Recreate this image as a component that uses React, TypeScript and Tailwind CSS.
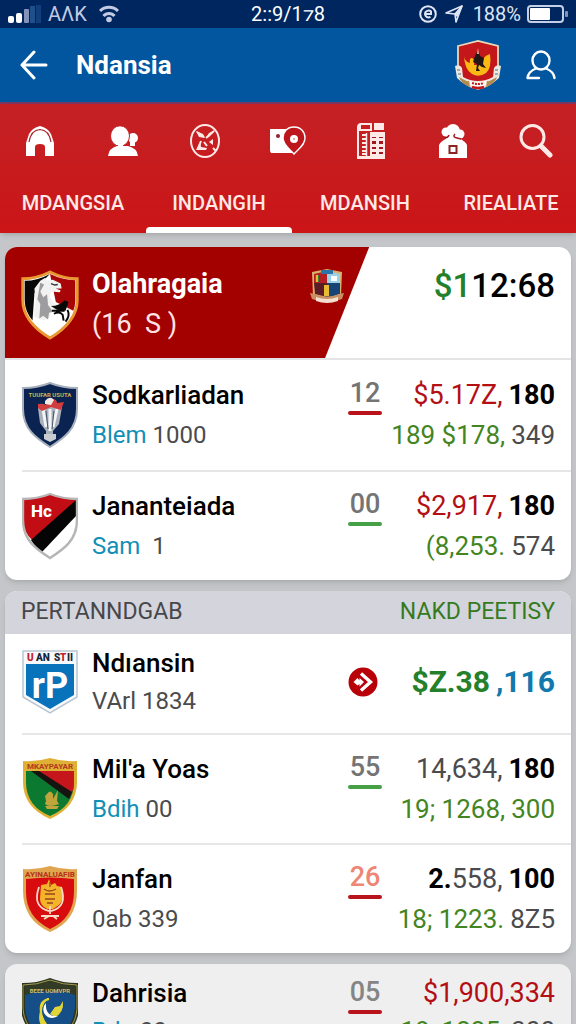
import type { ReactNode } from "react";
import clsx from "clsx";

type Piece = { text: string; className: string };

type Team = {
  key: string;
  name: string;
  tag?: string;
  detail: string;
  crest: ReactNode;
  count?: string;
  countClass?: string;
  barClass?: string;
  amount: Piece[];
  sub?: Piece[];
  compact?: boolean;
};

const RED = "text-[#b30f14]";
const GREEN = "text-[#43851f]";
const GRAY = "text-[#4b4b4d]";
const STRONG = "font-bold text-black";

const TABS = ["MDANGSIA", "INDANGIH", "MDANSIH", "RIEALIATE"];

const TOP_TEAMS: Team[] = [
  {
    key: "sod",
    name: "Sodkarliadan",
    tag: "Blem",
    detail: "1000",
    crest: <CupCrest />,
    count: "12",
    countClass: "text-[#747474]",
    barClass: "bg-[#b9131b]",
    amount: [{ text: "$5.17Z,", className: RED }, { text: "180", className: STRONG }],
    sub: [{ text: "189 $178,", className: GREEN }, { text: "349", className: GRAY }],
  },
  {
    key: "jan",
    name: "Jananteiada",
    tag: "Sam",
    detail: "\u00a01",
    crest: <StripeCrest />,
    count: "00",
    countClass: "text-[#747474]",
    barClass: "bg-[#46a046]",
    amount: [{ text: "$2,917,", className: RED }, { text: "180", className: STRONG }],
    sub: [{ text: "(8,253.", className: GREEN }, { text: "574", className: GRAY }],
  },
];

const SECTION_TEAMS: Team[] = [
  {
    key: "ndi",
    name: "Ndıansin",
    detail: "VArl 1834",
    crest: <BlueCrest />,
    amount: [
      { text: "$Z.38", className: "font-bold text-[#24802a]" },
      { text: ",116", className: "font-bold text-[#1279ad]" },
    ],
    compact: true,
  },
  {
    key: "mil",
    name: "Mil'a Yoas",
    tag: "Bdih",
    detail: "00",
    crest: <GreenCrest />,
    count: "55",
    countClass: "text-[#747474]",
    barClass: "bg-[#46a046]",
    amount: [{ text: "14,634,", className: GRAY }, { text: "180", className: STRONG }],
    sub: [{ text: "19; 1268,", className: GREEN }, { text: "300", className: GREEN }],
  },
  {
    key: "janfan",
    name: "Janfan",
    detail: "0ab 339",
    crest: <RedCrest />,
    count: "26",
    countClass: "text-[#ee8674]",
    barClass: "bg-[#b9131b]",
    amount: [
      { text: "2.", className: STRONG },
      { text: "558,", className: GRAY },
      { text: "100", className: STRONG },
    ],
    sub: [{ text: "18; 1223.", className: GREEN }, { text: "8Z5", className: GRAY }],
  },
];

const LAST_TEAM: Team = {
  key: "dah",
  name: "Dahrisia",
  tag: "Bdn",
  detail: "00",
  crest: <EagleCrest />,
  count: "05",
  countClass: "text-[#858585]",
  barClass: "bg-[#b9131b]",
  amount: [{ text: "$1,900,334", className: RED }],
  sub: [{ text: "18; 1225,", className: GREEN }, { text: "300", className: GRAY }],
  compact: true,
};

export default function App() {
  return (
    <div className="flex h-screen flex-col overflow-hidden bg-[#c4c6c9] font-['Roboto',sans-serif] text-black">
      <StatusBar />
      <header className="flex h-[76px] shrink-0 items-center border-b-2 border-[#7c3560] bg-[#02569f] px-5 text-white">
        <button type="button" aria-label="Back" className="shrink-0">
          <svg viewBox="0 0 28 30" className="h-[30px] w-7" fill="none" stroke="currentColor" strokeWidth="3" strokeLinecap="round" strokeLinejoin="round">
            <path d="M14 2 2 15l12 13M2 15h24" />
          </svg>
        </button>
        <h1 className="ml-7 flex-1 text-[26px] font-bold">Ndansia</h1>
        <HeaderCrest />
        <button type="button" aria-label="Profile" className="ml-6">
          <svg viewBox="0 0 30 30" className="h-[30px] w-[30px]" fill="none" stroke="currentColor" strokeWidth="2.4" strokeLinecap="round" strokeLinejoin="round">
            <ellipse cx="15" cy="10.5" rx="8.5" ry="9" />
            <path d="M10 18.5C5 20.5 2 23.5 1.5 28H13M20 18.5c5 2 8 5 8.500 9.5" />
          </svg>
        </button>
      </header>

      <nav className="shrink-0 overflow-hidden bg-linear-to-b from-[#c42125] to-[#cb1416] text-white shadow-md">
        <div className="flex h-[74px] items-center justify-between px-[22px]">
          <NavButton label="Home"><HomeIcon /></NavButton>
          <NavButton label="People"><PeopleIcon /></NavButton>
          <NavButton label="Matches"><BallIcon /></NavButton>
          <NavButton label="Places"><PlaceIcon /></NavButton>
          <NavButton label="Schedule"><SheetIcon /></NavButton>
          <NavButton label="Club"><ClubIcon /></NavButton>
          <NavButton label="Search"><SearchIcon /></NavButton>
        </div>
        <div className="-mr-2 grid grid-cols-4">
          {TABS.map((tab, i) => (
            <button
              key={tab}
              type="button"
              aria-pressed={i === 1}
              className="flex h-[55px] flex-col items-center text-xl font-medium text-[#ffe9e6]"
            >
              <span className="flex flex-1 items-center leading-none">{tab}</span>
              <span className={clsx("h-1.5 w-full rounded-t", i === 1 && "bg-white")} />
            </button>
          ))}
        </div>
      </nav>

      <main className="flex flex-1 flex-col gap-[11px] px-[5px] pt-3.5">
        <section className="shrink-0 overflow-hidden rounded-xl bg-white shadow-md">
          <div className="flex h-[113px] border-b-2 border-[#e4e4e6]">
            <div className="flex w-[65%] items-start bg-[#a30000] pt-[17px] pr-7 pl-[15px] text-white [clip-path:polygon(0_0,99%_0,87%_100%,0_100%)]">
              <HorseCrest />
              <div className="ml-3 flex-1">
                <h2 className="text-[27px] leading-10 font-bold">Olahragaia</h2>
                <p className="text-[27px] leading-10 whitespace-pre text-[#ffe3e3]">(16  S )</p>
              </div>
              <ShieldCrest />
            </div>
            <p className="flex-1 pt-[17px] pr-4 text-right text-[33px] leading-[44px] font-medium">
              <span className="text-[#24802a]">$1</span>12:68
            </p>
          </div>
          <TeamList teams={TOP_TEAMS} />
        </section>

        <section className="shrink-0 overflow-hidden rounded-xl bg-white shadow-md">
          <div className="flex h-[43px] items-center justify-between bg-[#d4d5dc] px-4 text-[23px]">
            <h2 className="text-[#47474b]">PERTANNDGAB</h2>
            <a href="#payments" className="text-[#357a1f]">NAKD PEETISY</a>
          </div>
          <TeamList teams={SECTION_TEAMS} />
        </section>

        <section className="shrink-0 overflow-hidden rounded-xl bg-[#efefef] shadow-md">
          <TeamList teams={[LAST_TEAM]} />
        </section>
      </main>
    </div>
  );
}

function StatusBar() {
  return (
    <div className="grid h-7 shrink-0 grid-cols-[1fr_auto_1fr] items-center bg-[#00265f] px-2 text-xl leading-none text-white">
      <div className="flex items-center text-[#c3cbe2]">
        <svg viewBox="0 0 34 18" className="h-[18px] w-[34px]">
          <rect x="0" y="11" width="6" height="7" rx="2" fill="#fff" />
          <rect x="8" y="8" width="6" height="10" rx="2" fill="#fff" />
          <rect x="16" y="4" width="5" height="14" rx="1" fill="#8492b8" />
          <rect x="22" y="1" width="5" height="17" fill="#20508c" />
          <rect x="28" y="0" width="5" height="18" fill="#123f7c" />
        </svg>
        <span className="ml-1.5">AΛK</span>
        <svg viewBox="0 0 20 18" className="ml-3 h-[18px] w-5" fill="none" stroke="currentColor" strokeWidth="3">
          <path d="M1 6c5-5 13-5 18 0M4.500 11c3-3.500 8-3.500 11 0" />
          <circle cx="10" cy="14.500" r="2.800" fill="currentColor" stroke="none" />
        </svg>
      </div>
      <span>2::9/1⁊8</span>
      <div className="flex items-center justify-end text-[#dfe5f3]">
        <svg viewBox="0 0 18 18" className="h-[18px] w-[18px]" fill="none" stroke="currentColor" strokeWidth="2">
          <circle cx="9" cy="9" r="7.800" />
          <path d="M6 9h6V6.500C10 4.500 6 6 6 9c0 3 3 4 5.500 3" />
        </svg>
        <svg viewBox="0 0 18 18" className="ml-2 h-[18px] w-[18px]" fill="none" stroke="currentColor" strokeWidth="1.600" strokeLinejoin="round">
          <path d="M1 8 17 1l-6 16-1-8Z" />
          <path d="M10 9 17 1l-5 10Z" fill="currentColor" />
        </svg>
        <span className="ml-2.5">188%</span>
        <svg viewBox="0 0 41 18" className="ml-1.5 h-[18px] w-[41px]">
          <rect x="1" y="1" width="35" height="16" rx="3" fill="none" stroke="#c3cfe4" strokeWidth="2" />
          <rect x="3" y="3" width="20" height="12" rx="1" fill="#fff" />
          <rect x="38" y="6" width="3" height="6" rx="1" fill="#7f93bd" />
        </svg>
      </div>
    </div>
  );
}

function NavButton({ label, children }: { label: string; children: ReactNode }) {
  return (
    <button type="button" aria-label={label} className="flex h-9 w-9 items-center justify-center">
      {children}
    </button>
  );
}

function TeamList({ teams }: { teams: Team[] }) {
  return (
    <ul>
      {teams.map((team, i) => (
        <li key={team.key} className="pl-[17px]">
          <TeamRow team={team} divider={i > 0} />
        </li>
      ))}
    </ul>
  );
}

function TeamRow({ team, divider }: { team: Team; divider: boolean }) {
  return (
    <div
      className={clsx(
        "flex items-center pr-4",
        team.compact ? "h-[99px] pb-1" : "h-[110px]",
        divider && "border-t-2 border-[#e6e6e8]",
      )}
    >
      <div className="w-14 shrink-0">{team.crest}</div>
      <div className="ml-3.5 flex-1">
        <h3 className={clsx("text-[26px] font-medium", team.compact ? "leading-[38px]" : "leading-10")}>{team.name}</h3>
        <p className={clsx("text-2xl text-[#4b4b4d]", team.compact ? "leading-[38px]" : "leading-10")}>
          {team.tag && <span className="mr-1.5 text-[#128fb5]">{team.tag}</span>}
          {team.detail}
        </p>
      </div>
      {team.count ? (
        <div className={clsx("w-[34px] text-center", team.compact ? "h-[76px]" : "h-20")}>
          <span className={clsx("block text-[27px] leading-9 font-medium", team.countClass)}>{team.count}</span>
          <span className={clsx("block h-1 rounded-full", team.barClass)} />
        </div>
      ) : (
        <ArrowBadge />
      )}
      <div className="w-[173px]">
        {team.sub ? (
          <>
            <Amount pieces={team.amount} className={clsx("text-[27px]", team.compact ? "leading-[38px]" : "leading-10")} />
            <Amount pieces={team.sub} className={clsx("text-[26px]", team.compact ? "leading-[38px]" : "leading-10")} />
          </>
        ) : (
          <Amount pieces={team.amount} className="text-3xl leading-10" />
        )}
      </div>
    </div>
  );
}

function Amount({ pieces, className }: { pieces: Piece[]; className: string }) {
  const last = pieces.length - 1;
  return (
    <p className={clsx("flex justify-end whitespace-nowrap", className)}>
      {pieces.map((p, i) => (
        <span key={i} className={clsx(p.className, i > 0 && i === last && "ml-1.5")}>
          {p.text}
        </span>
      ))}
    </p>
  );
}

function ArrowBadge() {
  return (
    <svg viewBox="0 0 30 30" className="mr-1 h-[30px] w-[30px]">
      <circle cx="15" cy="15" r="14.500" fill="#b80008" />
      <path d="M13 6.500 22.500 15 13 23.500" fill="none" stroke="#fff" strokeWidth="3.400" />
      <path d="m5.500 15 4-4 2 2.500V11l4.500 4-4.500 4.500V17L9.500 18.500Z" fill="#fff" />
    </svg>
  );
}

// nav icons

function HomeIcon() {
  return (
    <svg viewBox="0 0 30 30" className="h-[30px] w-[30px]">
      <path d="M1 30V17L4 8Q7 2 15 0q8 2 11 8l3 9v13h-9V21q0-3-5-3t-5 3v9Z" fill="#fff" />
      <path d="M4 16Q6 4 15 3.500 24 4 26 16" fill="none" stroke="#a5232b" strokeWidth="1.200" />
    </svg>
  );
}

function PeopleIcon() {
  return (
    <svg viewBox="0 0 30 30" className="h-[30px] w-[30px]" fill="#fff">
      <circle cx="25" cy="12" r="5" />
      <path d="M22 15h5v5h-5Z" />
      <ellipse cx="12" cy="10" rx="9.500" ry="10.200" stroke="#c42125" strokeWidth="1" />
      <path d="M0 30q1-8 9-10h11q9 2 10 10Z" />
      <path d="M10 20h5" stroke="#fff" strokeWidth="3" />
    </svg>
  );
}

function BallIcon() {
  return (
    <svg viewBox="0 0 30 34" className="h-[34px] w-[30px]" fill="none" stroke="#ffe9e6" strokeWidth="2">
      <ellipse cx="15" cy="17" rx="14" ry="16" />
      <path d="m7 8 7 5M24 7l-8 7M7 25h9M8 25l3-8M14 18l3 4M23 24l3 3" />
      <path d="m6 7 7 3 2 4-6-1ZM25 6l-6 7-3 1 3-5ZM19 18l4-3v6ZM6 26l4-8 1 5 6 1-1 2Z" fill="#ffe9e6" stroke="none" />
    </svg>
  );
}

function PlaceIcon() {
  return (
    <svg viewBox="0 0 36 30" className="h-[30px] w-9">
      <path d="M0 3h22v24H1l-1-2Z" fill="#fff" />
      <circle cx="8" cy="10" r="2" fill="#8d2233" />
      <path d="M24 1c7 0 11 5 11 11 0 7-6 10-11 16-5-6-11-9-11-16C13 6 17 1 24 1Z" fill="#bd161c" stroke="#fff" strokeWidth="1.400" />
      <circle cx="24" cy="13" r="4" fill="#fff" />
      <circle cx="24" cy="13" r="1" fill="#c98" />
    </svg>
  );
}

function SheetIcon() {
  return (
    <svg viewBox="0 0 28 36" className="h-9 w-7" fill="#ffe9e6">
      <path d="M3 0h12v8H2v25h26v3H0V4Q0 1 3 0Zm1 2v4h9V2Z" fillRule="evenodd" />
      <path d="M17 0h10v7H17Z" />
      <path d="M13 9h15v25H13Z" />
      <path d="M5 12h5M5 16h5M5 20h5M5 24h5M5 28h5M5 31h5" stroke="#ffe9e6" strokeWidth="2" />
      <path d="M9.500 10v23" stroke="#ffe9e6" strokeWidth="1.500" />
      <path d="M15 14h4v1h-4Zm7 0h4v1h-4Zm-7 4h4v3h-4Zm7 0h4v3h-4Zm-7 6h4v2h-4Zm7 0h4v2h-4Zm-7 5h4v2h-4Zm7 0h4v2h-4Z" fill="#a3161f" />
    </svg>
  );
}

function ClubIcon() {
  return (
    <svg viewBox="0 0 30 34" className="h-[34px] w-[30px]" fill="#fff">
      <circle cx="8" cy="8" r="4.500" />
      <circle cx="15" cy="7" r="7" />
      <circle cx="22" cy="10" r="4.500" />
      <path d="M8 9h14v6H8Z" />
      <path d="m1 34V21q1-3 8-7h12q7 4 8 7v13Z" />
      <path d="M6 14q4 0 5-3M17 10q-3 3 2 4l4 1" fill="none" stroke="#a3161f" strokeWidth="1.500" />
      <path d="M11.500 22h7v7h-7Z" fill="#fff" stroke="#8d2222" strokeWidth="2" />
    </svg>
  );
}

function SearchIcon() {
  return (
    <svg viewBox="0 0 34 36" className="h-9 w-[34px]" fill="none" stroke="#ffe9e6">
      <circle cx="13.500" cy="14" r="11.500" strokeWidth="3" />
      <path d="m22 23 9 9" strokeWidth="5" strokeLinecap="round" />
    </svg>
  );
}

// crests

const SHIELD = "M1 7Q15 7 28 2q13 5 27 5v21c0 20-13 29-27 38C14 57 1 48 1 28Z";

function HeaderCrest() {
  return (
    <svg viewBox="0 0 48 50" className="h-[50px] w-12">
      <path d="M4 6 24 1l20 5v26q-2 12-20 17Q6 44 4 32Z" fill="#c3171c" stroke="#ead9b9" strokeWidth="1.800" />
      <path d="M10 14q0 8 6 9-1-5 2-5 3 1 2 7h8q-1-8 8-11 2 14-4 19-7 5-14 1-8-5-8-20Z" fill="#fcb813" />
      <path d="M23 12h2l1 4 4 2-1 6 3 4-4-1-3-2-1 3 2 3h-4l1-7-4-2 2-6Z" fill="#231616" />
      <path d="m23 14 1-6 1 6Z" fill="#f4b29c" />
      <path d="M1 26q5-2 7 2l1 9q7 4 15 4t15-4l1-9q2-4 7-2l-2 12q-8 8-21 9Q10 46 3 38Z" fill="#efe8df" />
      <path d="M5 37q8 5 10 4l1 6Q7 44 5 37ZM43 37q-8 5-10 4l-1 6q9-3 11-10Z" fill="#b28b50" />
      <path d="M16 41q8 3 16 0v4q-8 4-16 0Z" fill="#fff" />
      <path d="M18 43q6 2 12 0" fill="none" stroke="#c3171c" strokeWidth="2" strokeDasharray="2 1" />
      <path d="M18 47q6 2 12 0" fill="none" stroke="#c3171c" strokeWidth="2.500" />
      <path d="M3 30h3M4 34h3M41 30h3M41 34h3" stroke="#8297a5" strokeWidth="1.500" />
    </svg>
  );
}

function HorseCrest() {
  return (
    <svg viewBox="0 0 60 72" className="mt-1.5 h-[70px] w-[60px] shrink-0">
      <path d="M2 9q14 0 28-7 14 7 28 7v22c0 19-15 31-28 39C17 62 2 50 2 31Z" fill="#fff" stroke="#e99832" strokeWidth="3" />
      <path d="M30 4q13 6 26 6.500V31q0 6-2 11L36 33Z" fill="#a80508" />
      <path d="M4 11q13 0 26-7l-8 8-8 12-2 28Q4 42 4 31Z" fill="#080808" />
      <path d="m20 11 5-3 2 3 6-1 8 4 1 5h-6l5 2-1 2-9-1-1 6 4 6 11 3-2 5-11-1-3 9-6 2-10-4 2-15-1-14Z" fill="#f1f1f1" />
      <path d="m20 13 4 2-4 7 3 6 4-3 1 11 5 7-4 1-1 7-5-4-4 3 1-15-3-5Z" fill="#9d9da0" />
      <path d="M31 37q9 0 14-6l4 2-3 9-9-1Z" fill="#080808" />
      <path d="M34 45q6-3 9 1l1 6M32 42h13M48 41q3 6-2 12" fill="none" stroke="#080808" strokeWidth="2" />
      <path d="m31 14 4 1.500 3-.5" stroke="#333" strokeWidth="1.500" fill="none" />
    </svg>
  );
}

function ShieldCrest() {
  return (
    <svg viewBox="0 0 36 36" className="mt-1 h-9 w-9 shrink-0">
      <path d="M3 4 18 1l15 3-1 24-14 5L4 28Z" fill="#d8b16a" />
      <path d="M5 6 18 3v12H5Z" fill="#b51f23" />
      <path d="M18 3 31 6v9H18Z" fill="#9bd2e7" />
      <path d="M5 15h13v14l-12-3Z" fill="#5a1d27" />
      <path d="M18 15h13v11l-13 4Z" fill="#174377" />
      <path d="M6 7h4v7H6Z" fill="#3d7a38" />
      <path d="M7 7h2v7H7Zm8 10h5v11h-5Z" fill="#e9bb32" />
      <path d="M12 2h12v4H12Z" fill="#2a75a6" />
      <path d="M22 8h6v5h-6Z" fill="#fff" />
      <path d="m1 25 5 1q12 5 24 0l5-1-2 6q-15 6-30 0Z" fill="#c78f62" />
      <path d="M7 29q11 4 22 0v4q-11 4-22 0Z" fill="#f4dfcf" />
    </svg>
  );
}

function CupCrest() {
  return (
    <svg viewBox="0 0 56 68" className="h-[68px] w-14">
      <path d={SHIELD} fill="#0b2350" stroke="#a6afbb" strokeWidth="2" />
      <text x="28" y="16" textAnchor="middle" fontSize="6" fontWeight="700" fill="#c9b155">TUUFAR USUTA</text>
      <path d="M16 27q12-5 24-1l-3 17-6 7v8h-7v-8l-6-8Z" fill="#a8b0b9" />
      <path d="m21 28 3 18M28 28v22M35 28l-4 18" stroke="#f2f4f6" strokeWidth="3" />
      <path d="M24 30l2 18M32 30l-2 18" stroke="#495467" strokeWidth="1" />
      <path d="M16 23q5-1 8 1 2-6 8-6 3 1 3 4l7-1-3 8-10-3-9 4-4-3Z" fill="#d23c3e" />
      <path d="M23 20q5-6 9-1l-3 5-6-1Z" fill="#f4e9e5" />
      <path d="M22 53h12v5l-6 3-6-3Z" fill="#c9cdd1" />
    </svg>
  );
}

function StripeCrest() {
  return (
    <svg viewBox="0 0 56 68" className="h-[68px] w-14">
      <path d={SHIELD} fill="#fff" />
      <path d="M1 7Q15 7 28 2q13 5 27 5v4L11 49Q1 40 1 28Z" fill="#c20d15" />
      <path d="M54 8v16L20 60q-7-5-11-12Z" fill="#050505" />
      <path d={SHIELD} fill="none" stroke="#b8b5b6" strokeWidth="2.400" />
      <text x="9" y="25" fontSize="17" fontWeight="800" fill="#fff">Hc</text>
    </svg>
  );
}

function BlueCrest() {
  return (
    <svg viewBox="0 0 56 66" className="h-[66px] w-14">
      <path d="M1 2h54v46L28 64 1 48Z" fill="#f7fafc" stroke="#b9c6d1" strokeWidth="1.500" />
      <path d="M4 15h48v31L28 60 4 46Z" fill="#0872ba" />
      <g fontSize="10" fontWeight="900" fill="#15273d">
        <text x="5" y="12" fill="#c5202b">U</text>
        <text x="14" y="12">AN</text>
        <text x="32" y="12">S</text>
        <text x="38" y="12" fill="#c5202b">T</text>
        <text x="45" y="12">II</text>
      </g>
      <text x="28" y="49" textAnchor="middle" fontSize="36" fontWeight="700" fill="#fff">rP</text>
    </svg>
  );
}

function GreenCrest() {
  return (
    <svg viewBox="0 0 56 66" className="h-[66px] w-14">
      <path d="M1 5Q15 6 28 2q13 4 27 3v21q0 25-27 37Q1 51 1 26Z" fill="#e0b035" />
      <path d="M4 15h48v11q0 24-24 34Q4 50 4 26Z" fill="#0b7930" />
      <path d="M14 15h38v11q0 7-3 13Z" fill="#c4161b" />
      <path d="M9 15h8l33 21-3 7Z" fill="#171310" />
      <text x="28" y="13" textAnchor="middle" fontSize="8" fontWeight="700" fill="#b33a1d">MKAYPAYAR</text>
      <path d="M25 38q3-5 6 0v5l5-9-1 11 2 3q-10 4-14 0l1-3-1-5Zm-2 12h14l-2 3H25Z" fill="#c0a43c" />
    </svg>
  );
}

function RedCrest() {
  return (
    <svg viewBox="0 0 56 68" className="h-[68px] w-14">
      <path d="M1 4Q15 5 28 1q13 4 27 3v22q0 30-27 41Q1 55 1 26Z" fill="#e2a54f" />
      <path d="M4 14q24-3 48 0v13q0 26-24 37Q4 52 4 27Z" fill="#d80b0e" />
      <text x="28" y="12" textAnchor="middle" fontSize="8" fontWeight="700" fill="#b23318">AYINALUAFIB</text>
      <path d="m27 14 2 6 4-2 2 3 5 1q3 12-3 18l-6 4h-6q-7-4-7-10l1-14 6-1Z" fill="#f3b42b" />
      <path d="M22 24q5 4 12 0M23 29h10M23 34h10M25 38h6M28 17v5" stroke="#9b441d" strokeWidth="1.300" fill="none" />
      <path d="M17 22q-7 20 10 24M39 22q7 20-10 24M28 41v8M19 51h18M22 54l5-3M31 51l4 3" fill="none" stroke="#f6dcc7" strokeWidth="1.800" />
    </svg>
  );
}

function EagleCrest() {
  return (
    <svg viewBox="0 0 56 68" className="h-[68px] w-14">
      <path d={SHIELD} fill="#164e88" stroke="#2b3520" strokeWidth="4" />
      <path d="M3 8q13 0 25-6 12 6 25 6v9q-12-4-25-4T3 17Z" fill="#323b25" />
      <path d={SHIELD} fill="none" stroke="#a59a50" strokeWidth="1" />
      <text x="28" y="15" textAnchor="middle" fontSize="6" fontWeight="700" fill="#c9bc73">BEEE UOMVPR</text>
      <path d="M27 21q-10 2-8 13 1 9 9 17-13-2-9-18Q20 22 27 21Z" fill="#e1d537" stroke="#e1d537" strokeWidth="2" />
      <path d="M41 23q1 12-8 16l-5-3 5-7 5-1Z" fill="#e1d537" />
      <path d="M24 25q-1 14 12 13-9 5-14-3Q20 29 24 25Z" fill="#fff" />
    </svg>
  );
}
